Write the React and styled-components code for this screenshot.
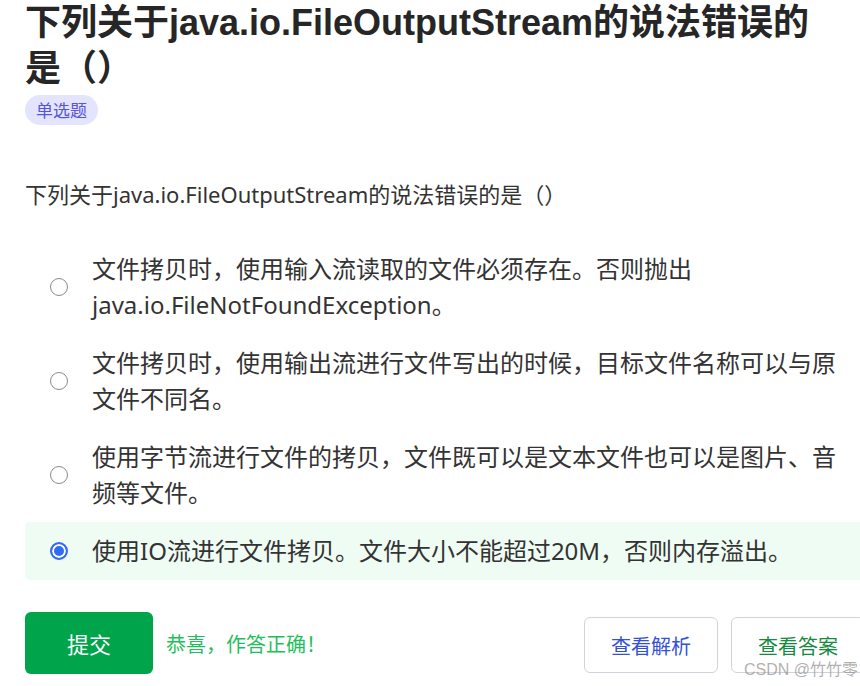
import React from "react";
import styled, { createGlobalStyle } from "styled-components";

const GlobalStyle = createGlobalStyle`
  body {
    margin: 0;
    background: #fff;
    font-family: "Noto Sans", "Noto Sans CJK SC", sans-serif;
    color: #333;
  }
`;

const options = [
  "文件拷贝时，使用输入流读取的文件必须存在。否则抛出java.io.FileNotFoundException。",
  "文件拷贝时，使用输出流进行文件写出的时候，目标文件名称可以与原文件不同名。",
  "使用字节流进行文件的拷贝，文件既可以是文本文件也可以是图片、音频等文件。",
  "使用IO流进行文件拷贝。文件大小不能超过20M，否则内存溢出。",
];

const App = () => {
  const selected = 3;
  return (
    <Page>
      <GlobalStyle />
      <Title>下列关于java.io.FileOutputStream的说法错误的是（）</Title>
      <Tag>单选题</Tag>
      <Question>下列关于java.io.FileOutputStream的说法错误的是（）</Question>
      <OptionList>
        {options.map((text, i) => (
          <Option key={i} active={i === selected}>
            <Radio active={i === selected} />
            <OptionText>{text}</OptionText>
          </Option>
        ))}
      </OptionList>
      <Footer>
        <SubmitButton>提交</SubmitButton>
        <Result>恭喜，作答正确！</Result>
        <Spacer />
        <GhostButton color="#3451d6">查看解析</GhostButton>
        <GhostButton color="#168a3f">查看答案</GhostButton>
      </Footer>
      <Watermark>CSDN @竹竹零</Watermark>
    </Page>
  );
};

const Page = styled.div`
  position: relative;
  width: 860px;
  height: 686px;
  overflow: hidden;
  padding: 0 0 0 25px;
  box-sizing: border-box;
`;

const Title = styled.h1`
  margin: 0;
  width: 795px;
  font-family: "Liberation Sans", "Noto Sans CJK SC", sans-serif;
  font-size: 36px;
  font-weight: 700;
  line-height: 46px;
  color: #262626;
`;

const Tag = styled.span`
  display: inline-block;
  margin-top: 3px;
  padding: 0 11px;
  height: 30px;
  line-height: 30px;
  border-radius: 15px;
  background: #e2e5fd;
  color: #5a52d8;
  font-family: "Noto Sans CJK SC", sans-serif;
  font-size: 17px;
`;

const Question = styled.p`
  margin: 54px 0 0;
  font-size: 22px;
  line-height: 30px;
  color: #333;
`;

const OptionList = styled.div`
  margin-top: 31px;
  display: flex;
  flex-direction: column;
`;

const Option = styled.div`
  display: flex;
  align-items: center;
  gap: 24px;
  padding: 11px 0 11px 25px;
  margin-right: -10px;
  border-radius: 5px;
  background: ${({ active }) => (active ? "#effcf3" : "transparent")};
`;

const Radio = styled.span`
  flex: none;
  width: 18px;
  height: 18px;
  box-sizing: border-box;
  border-radius: 50%;
  border: ${({ active }) => (active ? "2px solid #2f6bf6" : "1.5px solid #8a8a8a")};
  background: ${({ active }) => (active ? "#2f6bf6" : "#fff")};
  box-shadow: ${({ active }) => (active ? "inset 0 0 0 2px #fff" : "none")};
`;

const OptionText = styled.div`
  font-size: 24px;
  line-height: 36px;
  color: #333;
  padding-right: 20px;
`;

const Footer = styled.div`
  margin-top: 32px;
  display: flex;
  align-items: center;
`;

const SubmitButton = styled.button`
  width: 128px;
  height: 62px;
  border: none;
  border-radius: 6px;
  background: #00a54b;
  color: #fff;
  font-family: "Noto Sans CJK SC", sans-serif;
  font-size: 22px;
`;

const Result = styled.span`
  margin-left: 13px;
  color: #1fbf5b;
  font-family: "Noto Sans CJK SC", sans-serif;
  font-size: 20px;
`;

const Spacer = styled.div`
  flex: 1;
`;

const GhostButton = styled.button`
  flex: none;
  width: 134px;
  height: 56px;
  margin-left: 13px;
  margin-top: 4px;
  border: 1px solid #cfd3dc;
  border-radius: 6px;
  background: #fff;
  color: ${({ color }) => color};
  font-family: "Noto Sans CJK SC", sans-serif;
  font-size: 20px;
  &:last-child {
    margin-right: -5px;
  }
`;

const Watermark = styled.span`
  position: absolute;
  right: 2px;
  bottom: 6px;
  color: rgba(150, 150, 150, 0.75);
  font-family: "Liberation Sans", "Noto Sans CJK SC", sans-serif;
  font-size: 16px;
`;

export default App;
